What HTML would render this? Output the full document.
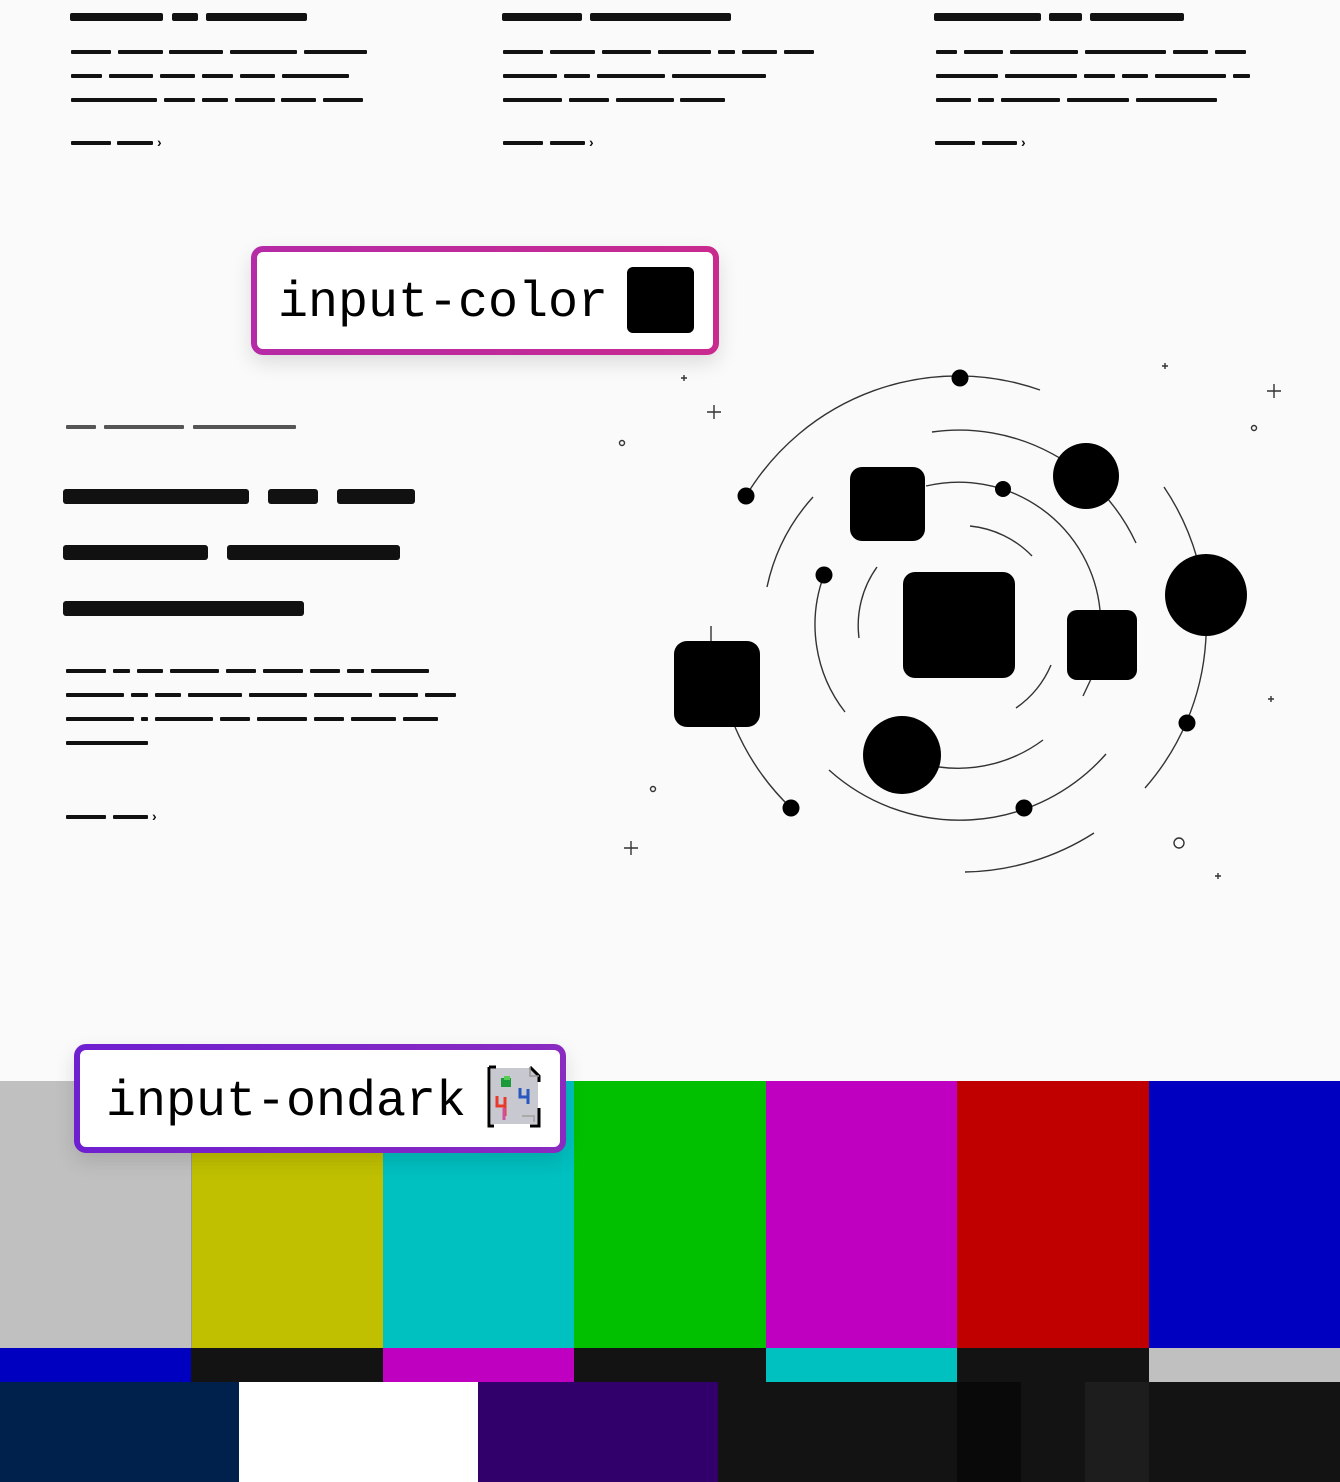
<!DOCTYPE html>
<html><head><meta charset="utf-8"><style>
*{margin:0;padding:0;box-sizing:border-box}
body{width:1340px;height:1482px;background:#fafafa;position:relative;overflow:hidden;font-family:"Liberation Sans",sans-serif}
.b{position:absolute;background:#111;border-radius:2px}
.t{height:8px}
.l{height:4px;border-radius:1px}
.g{position:absolute;height:4px;background:#555;border-radius:1px}
.h{height:15px;border-radius:3px}
.c{position:absolute;font-size:14px;color:#111;line-height:14px;font-weight:bold}
.box{position:absolute;border-radius:12px;padding:6px;box-shadow:0 8px 20px rgba(0,0,0,0.12)}
.box .in{width:100%;height:100%;background:#fff;border-radius:6px;position:relative}
.box .tx{position:absolute;font-family:"Liberation Mono",monospace;font-size:50px;color:#000;line-height:50px}
.cb{position:absolute}
</style></head><body>

<!-- column 1 -->
<div class="b t" style="left:70px;top:13px;width:93px"></div>
<div class="b t" style="left:172px;top:13px;width:26px"></div>
<div class="b t" style="left:206px;top:13px;width:101px"></div>
<div class="b l" style="left:71px;top:50px;width:40px"></div><div class="b l" style="left:118px;top:50px;width:45px"></div><div class="b l" style="left:169px;top:50px;width:54px"></div><div class="b l" style="left:230px;top:50px;width:67px"></div><div class="b l" style="left:304px;top:50px;width:63px"></div>
<div class="b l" style="left:71px;top:74px;width:31px"></div><div class="b l" style="left:109px;top:74px;width:44px"></div><div class="b l" style="left:160px;top:74px;width:35px"></div><div class="b l" style="left:202px;top:74px;width:31px"></div><div class="b l" style="left:240px;top:74px;width:35px"></div><div class="b l" style="left:282px;top:74px;width:67px"></div>
<div class="b l" style="left:71px;top:98px;width:86px"></div><div class="b l" style="left:164px;top:98px;width:31px"></div><div class="b l" style="left:202px;top:98px;width:26px"></div><div class="b l" style="left:235px;top:98px;width:40px"></div><div class="b l" style="left:281px;top:98px;width:35px"></div><div class="b l" style="left:323px;top:98px;width:40px"></div>
<div class="b l" style="left:71px;top:141px;width:40px"></div><div class="b l" style="left:117px;top:141px;width:36px"></div><div class="c" style="left:157px;top:135px">›</div>

<!-- column 2 -->
<div class="b t" style="left:502px;top:13px;width:80px"></div>
<div class="b t" style="left:590px;top:13px;width:141px"></div>
<div class="b l" style="left:503px;top:50px;width:40px"></div><div class="b l" style="left:550px;top:50px;width:45px"></div><div class="b l" style="left:602px;top:50px;width:49px"></div><div class="b l" style="left:658px;top:50px;width:53px"></div><div class="b l" style="left:718px;top:50px;width:17px"></div><div class="b l" style="left:742px;top:50px;width:35px"></div><div class="b l" style="left:784px;top:50px;width:30px"></div>
<div class="b l" style="left:503px;top:74px;width:54px"></div><div class="b l" style="left:564px;top:74px;width:26px"></div><div class="b l" style="left:597px;top:74px;width:68px"></div><div class="b l" style="left:672px;top:74px;width:94px"></div>
<div class="b l" style="left:503px;top:98px;width:59px"></div><div class="b l" style="left:569px;top:98px;width:40px"></div><div class="b l" style="left:616px;top:98px;width:58px"></div><div class="b l" style="left:680px;top:98px;width:45px"></div>
<div class="b l" style="left:503px;top:141px;width:40px"></div><div class="b l" style="left:550px;top:141px;width:35px"></div><div class="c" style="left:589px;top:135px">›</div>

<!-- column 3 -->
<div class="b t" style="left:934px;top:13px;width:107px"></div>
<div class="b t" style="left:1049px;top:13px;width:33px"></div>
<div class="b t" style="left:1090px;top:13px;width:94px"></div>
<div class="b l" style="left:936px;top:50px;width:21px"></div><div class="b l" style="left:964px;top:50px;width:39px"></div><div class="b l" style="left:1010px;top:50px;width:68px"></div><div class="b l" style="left:1085px;top:50px;width:81px"></div><div class="b l" style="left:1173px;top:50px;width:35px"></div><div class="b l" style="left:1215px;top:50px;width:31px"></div>
<div class="b l" style="left:936px;top:74px;width:62px"></div><div class="b l" style="left:1005px;top:74px;width:72px"></div><div class="b l" style="left:1084px;top:74px;width:31px"></div><div class="b l" style="left:1122px;top:74px;width:26px"></div><div class="b l" style="left:1155px;top:74px;width:71px"></div><div class="b l" style="left:1233px;top:74px;width:17px"></div>
<div class="b l" style="left:936px;top:98px;width:35px"></div><div class="b l" style="left:978px;top:98px;width:16px"></div><div class="b l" style="left:1001px;top:98px;width:59px"></div><div class="b l" style="left:1067px;top:98px;width:62px"></div><div class="b l" style="left:1136px;top:98px;width:81px"></div>
<div class="b l" style="left:935px;top:141px;width:40px"></div><div class="b l" style="left:982px;top:141px;width:35px"></div><div class="c" style="left:1021px;top:135px">›</div>

<!-- input-color box -->
<div class="box" style="left:251px;top:246px;width:468px;height:109px;background:linear-gradient(90deg,#b52aa6,#c92a8e)">
  <div class="in">
    <div class="tx" style="left:21px;top:27px">input-color</div>
    <div style="position:absolute;left:370px;top:15px;width:67px;height:66px;background:#000;border-radius:6px"></div>
  </div>
</div>

<!-- left section -->
<div class="g" style="left:66px;top:425px;width:30px"></div><div class="g" style="left:104px;top:425px;width:80px"></div><div class="g" style="left:193px;top:425px;width:103px"></div>
<div class="b h" style="left:63px;top:489px;width:186px"></div><div class="b h" style="left:268px;top:489px;width:50px"></div><div class="b h" style="left:337px;top:489px;width:78px"></div>
<div class="b h" style="left:63px;top:545px;width:145px"></div><div class="b h" style="left:227px;top:545px;width:173px"></div>
<div class="b h" style="left:63px;top:601px;width:241px"></div>
<div class="b l" style="left:66px;top:669px;width:40px"></div><div class="b l" style="left:113px;top:669px;width:17px"></div><div class="b l" style="left:137px;top:669px;width:26px"></div><div class="b l" style="left:170px;top:669px;width:49px"></div><div class="b l" style="left:226px;top:669px;width:30px"></div><div class="b l" style="left:263px;top:669px;width:40px"></div><div class="b l" style="left:310px;top:669px;width:30px"></div><div class="b l" style="left:347px;top:669px;width:17px"></div><div class="b l" style="left:371px;top:669px;width:58px"></div>
<div class="b l" style="left:66px;top:693px;width:58px"></div><div class="b l" style="left:131px;top:693px;width:17px"></div><div class="b l" style="left:155px;top:693px;width:26px"></div><div class="b l" style="left:188px;top:693px;width:54px"></div><div class="b l" style="left:249px;top:693px;width:58px"></div><div class="b l" style="left:314px;top:693px;width:58px"></div><div class="b l" style="left:379px;top:693px;width:39px"></div><div class="b l" style="left:425px;top:693px;width:31px"></div>
<div class="b l" style="left:66px;top:717px;width:68px"></div><div class="b l" style="left:141px;top:717px;width:7px"></div><div class="b l" style="left:155px;top:717px;width:58px"></div><div class="b l" style="left:220px;top:717px;width:30px"></div><div class="b l" style="left:257px;top:717px;width:50px"></div><div class="b l" style="left:314px;top:717px;width:30px"></div><div class="b l" style="left:351px;top:717px;width:45px"></div><div class="b l" style="left:403px;top:717px;width:35px"></div>
<div class="b l" style="left:66px;top:741px;width:82px"></div>
<div class="b l" style="left:66px;top:815px;width:40px"></div><div class="b l" style="left:113px;top:815px;width:35px"></div><div class="c" style="left:152px;top:809px">›</div>

<!-- graphic -->
<svg style="position:absolute;left:0;top:0" width="1340" height="1000" viewBox="0 0 1340 1000">
<g fill="none" stroke="#333" stroke-width="1.4">
<path d="M746,496 A247,247 0 0 1 1040,390"/>
<path d="M1164,487 A247,247 0 0 1 1145,788"/>
<path d="M1094,833 A247,247 0 0 1 965,872"/>
<path d="M735,727 A247,247 0 0 0 791,808"/>
<path d="M711,626 L711,641"/>
<path d="M932,432 A195,195 0 0 1 1136,543"/>
<path d="M813,497 A195,195 0 0 0 767,587"/>
<path d="M829,770 A195,195 0 0 0 1106,754"/>
<path d="M926,486 A142,142 0 0 1 1100,610"/>
<path d="M824,575 A142,142 0 0 0 845,712"/>
<path d="M1043,740 A142,142 0 0 1 939,767"/>
<path d="M1091,679 L1083,696"/>
<path d="M970,526 A100,100 0 0 1 1032,556"/>
<path d="M877,567 A100,100 0 0 0 859,638"/>
<path d="M1051,665 A100,100 0 0 1 1016,708"/>
<path d="M684,375v6M681,378h6M714,405v14M707,412h14M1165,363v6M1162,366h6M1274,384v14M1267,391h14M1271,696v6M1268,699h6M631,841v14M624,848h14M1218,873v6M1215,876h6"/>
<circle cx="622" cy="443" r="2.5"/><circle cx="1254" cy="428" r="2.5"/><circle cx="653" cy="789" r="2.5"/><circle cx="1179" cy="843" r="5"/>
</g>
<g fill="#000">
<rect x="850" y="467" width="75" height="74" rx="12"/>
<rect x="903" y="572" width="112" height="106" rx="12"/>
<rect x="1067" y="610" width="70" height="70" rx="10"/>
<rect x="674" y="641" width="86" height="86" rx="13"/>
<circle cx="1086" cy="476" r="33"/><circle cx="1206" cy="595" r="41"/><circle cx="902" cy="755" r="39"/>
<circle cx="960" cy="378" r="8.5"/><circle cx="746" cy="496" r="8.5"/><circle cx="1003" cy="489" r="8"/><circle cx="824" cy="575" r="8.5"/><circle cx="1187" cy="723" r="8.5"/><circle cx="791" cy="808" r="8.5"/><circle cx="1024" cy="808" r="8.5"/>
</g>
</svg>

<!-- color bars -->
<div class="cb" style="left:0;top:1081px;width:192px;height:267px;background:#c0c0c0"></div>
<div class="cb" style="left:191px;top:1081px;width:192px;height:267px;background:#c0c000;border-left:1px solid #999"></div>
<div class="cb" style="left:383px;top:1081px;width:192px;height:267px;background:#00c0c0"></div>
<div class="cb" style="left:574px;top:1081px;width:192px;height:267px;background:#00c000"></div>
<div class="cb" style="left:766px;top:1081px;width:192px;height:267px;background:#c000c0"></div>
<div class="cb" style="left:957px;top:1081px;width:192px;height:267px;background:#c00000"></div>
<div class="cb" style="left:1149px;top:1081px;width:191px;height:267px;background:#0000c0"></div>
<div class="cb" style="left:0;top:1348px;width:192px;height:34px;background:#0000c0"></div>
<div class="cb" style="left:191px;top:1348px;width:192px;height:34px;background:#131313"></div>
<div class="cb" style="left:383px;top:1348px;width:192px;height:34px;background:#c000c0"></div>
<div class="cb" style="left:574px;top:1348px;width:192px;height:34px;background:#131313"></div>
<div class="cb" style="left:766px;top:1348px;width:192px;height:34px;background:#00c0c0"></div>
<div class="cb" style="left:957px;top:1348px;width:192px;height:34px;background:#131313"></div>
<div class="cb" style="left:1149px;top:1348px;width:191px;height:34px;background:#c0c0c0"></div>
<div class="cb" style="left:0;top:1382px;width:240px;height:100px;background:#00214c"></div>
<div class="cb" style="left:239px;top:1382px;width:240px;height:100px;background:#ffffff"></div>
<div class="cb" style="left:478px;top:1382px;width:240px;height:100px;background:#32006a"></div>
<div class="cb" style="left:718px;top:1382px;width:239px;height:100px;background:#131313"></div>
<div class="cb" style="left:957px;top:1382px;width:64px;height:100px;background:#090909"></div>
<div class="cb" style="left:1021px;top:1382px;width:64px;height:100px;background:#131313"></div>
<div class="cb" style="left:1085px;top:1382px;width:64px;height:100px;background:#1d1d1d"></div>
<div class="cb" style="left:1149px;top:1382px;width:191px;height:100px;background:#131313"></div>

<!-- input-ondark box -->
<div class="box" style="left:74px;top:1044px;width:492px;height:109px;background:linear-gradient(90deg,#6e1fd0,#8a2ac0)">
  <div class="in">
    <div class="tx" style="left:26px;top:28px">input-ondark</div>
    <svg style="position:absolute;left:404px;top:14px" width="58" height="66" viewBox="0 0 58 66">
      <path d="M7,4 H46 L54,12 V60 H7 Z" fill="#c8c8d0"/>
      <path d="M5,3 V62 H10 M5,3 H12 M46,3 L55,12 V18 M55,44 V62 H46" fill="none" stroke="#000" stroke-width="3"/>
      <path d="M46,3 V12 H55" fill="none" stroke="#999" stroke-width="1.5"/>
      <rect x="17" y="14" width="10" height="9" fill="#1a9a3a"/><rect x="20" y="12" width="6" height="4" fill="#5c5"/>
      <path d="M36,24 V33 H44 M44,25 V40" fill="none" stroke="#2858c0" stroke-width="3"/>
      <path d="M13,32 V42 H22 M21,33 V52" fill="none" stroke="#e83a2a" stroke-width="3"/>
      <path d="M20,44 V56" stroke="#d050a0" stroke-width="3"/>
      <path d="M38,52 H50 V58" fill="none" stroke="#aaa" stroke-width="2"/>
    </svg>
  </div>
</div>
</body></html>
